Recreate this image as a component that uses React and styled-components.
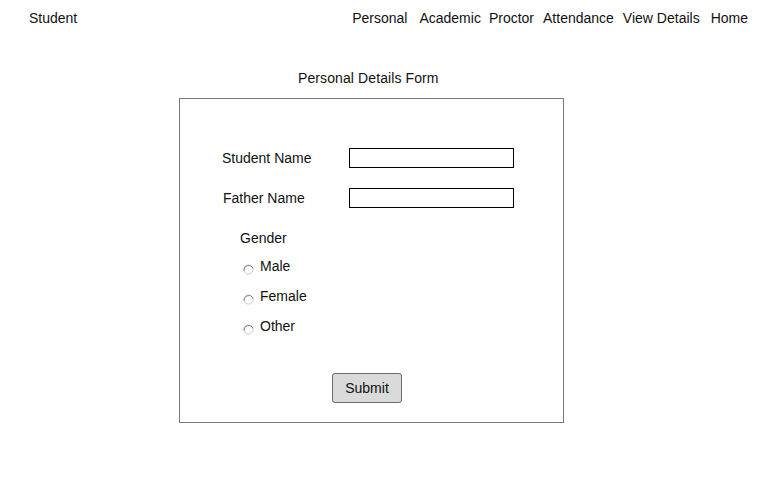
import styled, { createGlobalStyle } from "styled-components";

const GlobalStyle = createGlobalStyle`
    body {
        margin: 0;
        background: #ffffff;
        font-family: "Liberation Sans", Arial, sans-serif;
        font-size: 14px;
        color: #111111;
    }
`;

const Page = styled.div`
    width: 778px;
    height: 492px;
`;
const Header = styled.div`
    display: flex;
    justify-content: space-between;
    align-items: center;
    padding: 10px 30px 0 29px;
    line-height: 16px;
`;
const Brand = styled.div``;
const Nav = styled.nav`
    display: flex;
    gap: 8px;
`;
const NavItem = styled.span`
    margin-left: ${(p) => p.$extra || 0}px;
`;
const Title = styled.div`
    margin: 44px 0 0 298px;
    line-height: 16px;
    letter-spacing: 0.1px;
`;
const Box = styled.form`
    margin: 12px 0 0 179px;
    border: 1px solid #7a7a7a;
    padding: 49px 0 0 42px;
    box-sizing: content-box;
    width: 341px;
    height: 274px;
    display: flex;
    flex-direction: column;
`;
const Row = styled.div`
    display: flex;
    align-items: center;
    height: 20px;
    margin-bottom: 20px;
`;
const Label = styled.label`
    width: 127px;
    padding-left: ${(p) => p.$shift || 0}px;
    box-sizing: border-box;
`;
const TextInput = styled.input`
    width: 165px;
    height: 20px;
    box-sizing: border-box;
    border: 1px solid #000000;
    margin: 0;
    padding: 0 3px;
    font: inherit;
    outline: none;
`;
const GenderTitle = styled.div`
    margin: 2px 0 0 18px;
    line-height: 16px;
`;
const Options = styled.div`
    display: flex;
    flex-direction: column;
    gap: 14px;
    margin: 12px 0 0 21px;
`;
const Option = styled.label`
    display: flex;
    align-items: flex-start;
    line-height: 16px;
    height: 16px;
`;
const Dot = styled.svg`
    margin: 6px 6px 0 0;
    flex: none;
`;
const SubmitButton = styled.button`
    margin: 39px 0 0 110px;
    width: 70px;
    height: 30px;
    background: #dadada;
    border: 1px solid #6b6b6b;
    border-radius: 3px;
    font: inherit;
    color: #111111;
    padding: 0;
`;

const Radio = () => (
    <Dot width="11" height="11" viewBox="0 0 11 11">
        <circle cx="5.5" cy="5.5" r="4.6" fill="#ffffff" stroke="#c8c8c8" strokeWidth="1" />
        <path d="M1.1 6.6 A4.6 4.6 0 0 1 9.9 4.4" fill="none" stroke="#7f7f7f" strokeWidth="1" />
    </Dot>
);

const navItems = [
    { name: "Personal", extra: 0 },
    { name: "Academic", extra: 4 },
    { name: "Proctor", extra: 0 },
    { name: "Attendance", extra: 1 },
    { name: "View Details", extra: 1 },
    { name: "Home", extra: 3 },
];

const App = () => {
    return (
        <>
        <GlobalStyle />
        <Page>
            <Header>
                <Brand>Student</Brand>
                <Nav>
                    {navItems.map((item) => (
                        <NavItem key={item.name} $extra={item.extra}>{item.name}</NavItem>
                    ))}
                </Nav>
            </Header>
            <Title>Personal Details Form</Title>
            <Box onSubmit={(e) => e.preventDefault()}>
                <Row>
                    <Label>Student Name</Label>
                    <TextInput type="text" />
                </Row>
                <Row>
                    <Label $shift={1}>Father Name</Label>
                    <TextInput type="text" />
                </Row>
                <GenderTitle>Gender</GenderTitle>
                <Options>
                    {["Male", "Female", "Other"].map((g) => (
                        <Option key={g}>
                            <Radio />
                            {g}
                        </Option>
                    ))}
                </Options>
                <SubmitButton type="submit">Submit</SubmitButton>
            </Box>
        </Page>
        </>
    );
};

export default App;
